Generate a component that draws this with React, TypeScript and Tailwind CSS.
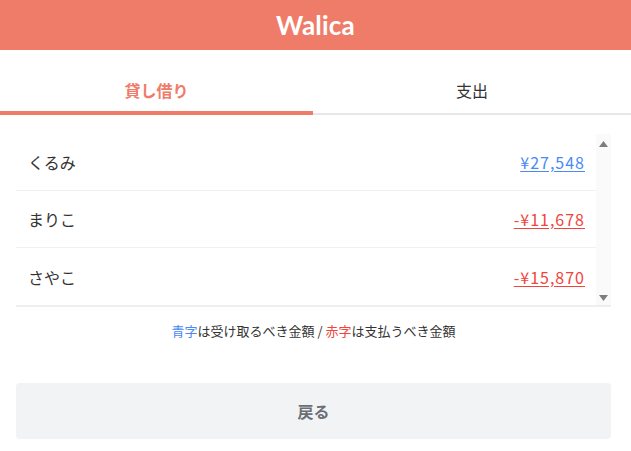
import React from 'react'

const members = [
  { name: 'くるみ', amount: '¥27,548', plus: true },
  { name: 'まりこ', amount: '-¥11,678', plus: false },
  { name: 'さやこ', amount: '-¥15,870', plus: false },
]

export default function App() {
  return (
    <div className="w-[631px] min-h-[451px] bg-white text-[#333] font-['Noto_Sans_CJK_JP','Noto_Sans',sans-serif]">
      {/* header */}
      <header className="h-[50px] bg-[#ef7c69] flex items-center justify-center">
        <h1 className="text-white text-[26px] font-bold font-['Lato','Noto_Sans_CJK_JP',sans-serif] tracking-[0.2px]">
          Walica
        </h1>
      </header>

      {/* tabs */}
      <nav className="flex h-[65px]">
        <button className="w-[313px] pt-7 pb-[9px] border-b-4 border-[#ef7c69] text-[#ef7c69] font-bold text-base leading-6">
          貸し借り
        </button>
        <button className="flex-1 pt-7 pb-[11px] border-b-2 border-[#e5e7eb] text-[#333] text-base leading-6">
          支出
        </button>
      </nav>

      <main className="pl-4 pr-5">
        {/* balances */}
        <div className="mt-[19px] flex border-b-2 border-[#eeeeee]">
          <ul className="flex-1">
            {members.map((m, i) => (
              <li
                key={m.name}
                className={`h-[57px] flex items-center justify-between pl-3 pr-3 ${i < members.length - 1 ? 'border-b border-[#f0f0f0]' : ''}`}
              >
                <span className="text-base">{m.name}</span>
                <a
                  href="#"
                  className={`text-base tracking-[1px] -mr-px underline underline-offset-2 ${m.plus ? 'text-[#4a8af4]' : 'text-[#f0443c]'}`}
                >
                  {m.amount}
                </a>
              </li>
            ))}
          </ul>
          <div className="w-[15px] bg-[#fafafa] flex flex-col items-center justify-between pt-[7px] pb-[4px]">
            <svg width="9" height="6" viewBox="0 0 9 6">
              <path d="M4.5 0 L9 6 L0 6 Z" fill="#7d7d7d" />
            </svg>
            <svg width="9" height="6" viewBox="0 0 9 6">
              <path d="M0 0 L9 0 L4.5 6 Z" fill="#7d7d7d" />
            </svg>
          </div>
        </div>

        {/* legend */}
        <p className="mt-[14px] text-center text-[13px] leading-5">
          <span className="text-[#4a8af4]">青字</span>は受け取るべき金額 / <span className="text-[#f0443c]">赤字</span>は支払うべき金額
        </p>

        {/* back */}
        <button className="mt-[42px] w-full h-14 rounded bg-[#f2f3f5] text-[#6b6f75] font-bold text-base">
          戻る
        </button>
      </main>
    </div>
  )
}
